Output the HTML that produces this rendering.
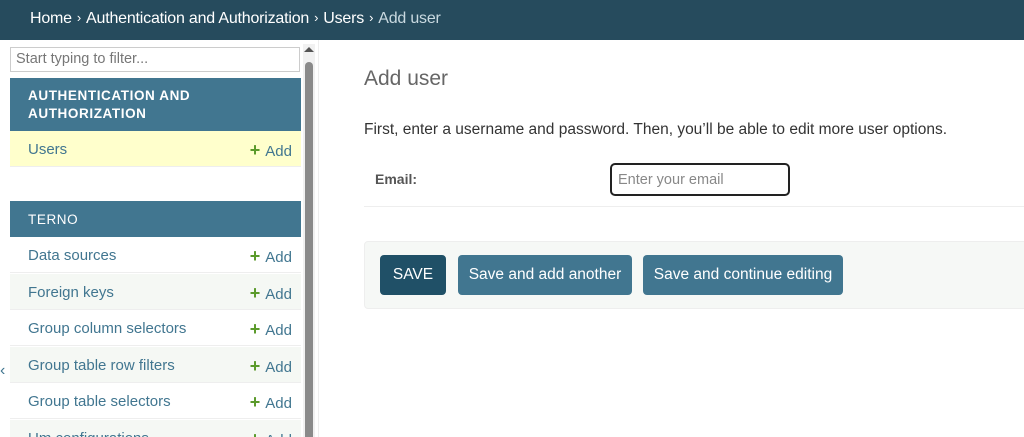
<!DOCTYPE html>
<html><head><style>
*{box-sizing:border-box;margin:0;padding:0}
html,body{width:1024px;height:437px;overflow:hidden}
body{background:#fff;font-family:"Liberation Sans",sans-serif;position:relative;color:#333}
.hdr{position:absolute;left:0;top:0;width:1024px;height:40px;background:#264b5d;color:#fff;font-size:16px;padding:10px 0 0 30px;letter-spacing:-0.2px}
.hdr .s{font-size:13px;margin:0 5px;position:relative;top:-1px}
.hdr .last{color:#c9d9e0}
.filter{position:absolute;left:10px;top:47px;width:290px;height:25px;border:1px solid #ccc;background:#fff;font-size:14.5px;color:#777;padding:3px 5px}
.cap{position:absolute;left:10px;width:291px;background:#417690;color:#fff;font-weight:bold;font-size:13.5px;letter-spacing:0.6px;padding-left:18px}
.row{position:absolute;left:10px;width:291px;height:36px;border-bottom:1px solid #eee;font-size:15px;color:#417690;padding:10px 0 0 18px}
.row .add{position:absolute;right:9px;top:9px}
.add b{color:#5b9a2b;font-size:18px;margin-right:5px;font-weight:bold}
.l{background:#f5f8f4}
.sb{position:absolute;left:303px;top:44px;width:12px;height:393px;background:#f1f1f1}
.thumb{position:absolute;left:305px;top:62px;width:8px;height:380px;background:#8a8a8a;border-radius:4px}
.arr{position:absolute;left:304px;top:47px;width:0;height:0;border-left:5px solid transparent;border-right:5px solid transparent;border-bottom:5px solid #555}
.vl{position:absolute;left:318px;top:40px;width:1px;height:397px;background:#eee}
h1{position:absolute;left:364px;top:67px;font-size:21px;font-weight:normal;color:#666}
.p{position:absolute;left:364px;top:121px;font-size:15.5px;color:#333}
.lab{position:absolute;left:375px;top:171px;font-weight:bold;font-size:14px;color:#555}
.inp{position:absolute;left:610px;top:163px;width:180px;height:33px;border:2px solid #222;border-radius:5px;font-size:14.5px;color:#888;padding:7px 6px}
.hr{position:absolute;left:364px;top:206px;width:660px;height:1px;background:#eee}
.sub{position:absolute;left:364px;top:241px;width:670px;height:68px;background:#f6f8f6;border:1px solid #eee;border-radius:4px}
.btn{position:absolute;top:255px;height:40px;border-radius:4px;background:#417690;color:#fff;font-size:15.5px;text-align:center;padding-top:11px}
</style></head><body>
<div class="hdr">Home<span class="s">›</span>Authentication and Authorization<span class="s">›</span>Users<span class="s">›</span><span class="last">Add user</span></div>
<div class="filter">Start typing to filter...</div>
<div class="cap" style="top:78px;height:53px;padding-top:9px;line-height:18px">AUTHENTICATION AND<br>AUTHORIZATION</div>
<div class="row" style="top:131px;background:#ffffcc">Users<span class="add"><b>+</b>Add</span></div>
<div class="cap" style="top:201px;height:36px;padding-top:11px;font-weight:normal">TERNO</div>
<div class="row" style="top:237px">Data sources<span class="add"><b>+</b>Add</span></div>
<div class="row l" style="top:274px">Foreign keys<span class="add"><b>+</b>Add</span></div>
<div class="row" style="top:310px">Group column selectors<span class="add"><b>+</b>Add</span></div>
<div class="row l" style="top:347px">Group table row filters<span class="add"><b>+</b>Add</span></div>
<div class="row" style="top:383px">Group table selectors<span class="add"><b>+</b>Add</span></div>
<div class="row l" style="top:420px">Um configurations<span class="add"><b>+</b>Add</span></div>
<div style="position:absolute;left:0;top:362px;color:#417690;font-size:16px">‹</div>
<div class="sb"></div><div class="arr"></div><div class="thumb"></div><div class="vl"></div>
<h1>Add user</h1>
<div class="p">First, enter a username and password. Then, you’ll be able to edit more user options.</div>
<div class="lab">Email:</div>
<div class="inp">Enter your email</div>
<div class="hr"></div>
<div class="sub"></div>
<div class="btn" style="left:380px;width:66px;background:#205067">SAVE</div>
<div class="btn" style="left:458px;width:174px">Save and add another</div>
<div class="btn" style="left:643px;width:200px">Save and continue editing</div>
</body></html>
